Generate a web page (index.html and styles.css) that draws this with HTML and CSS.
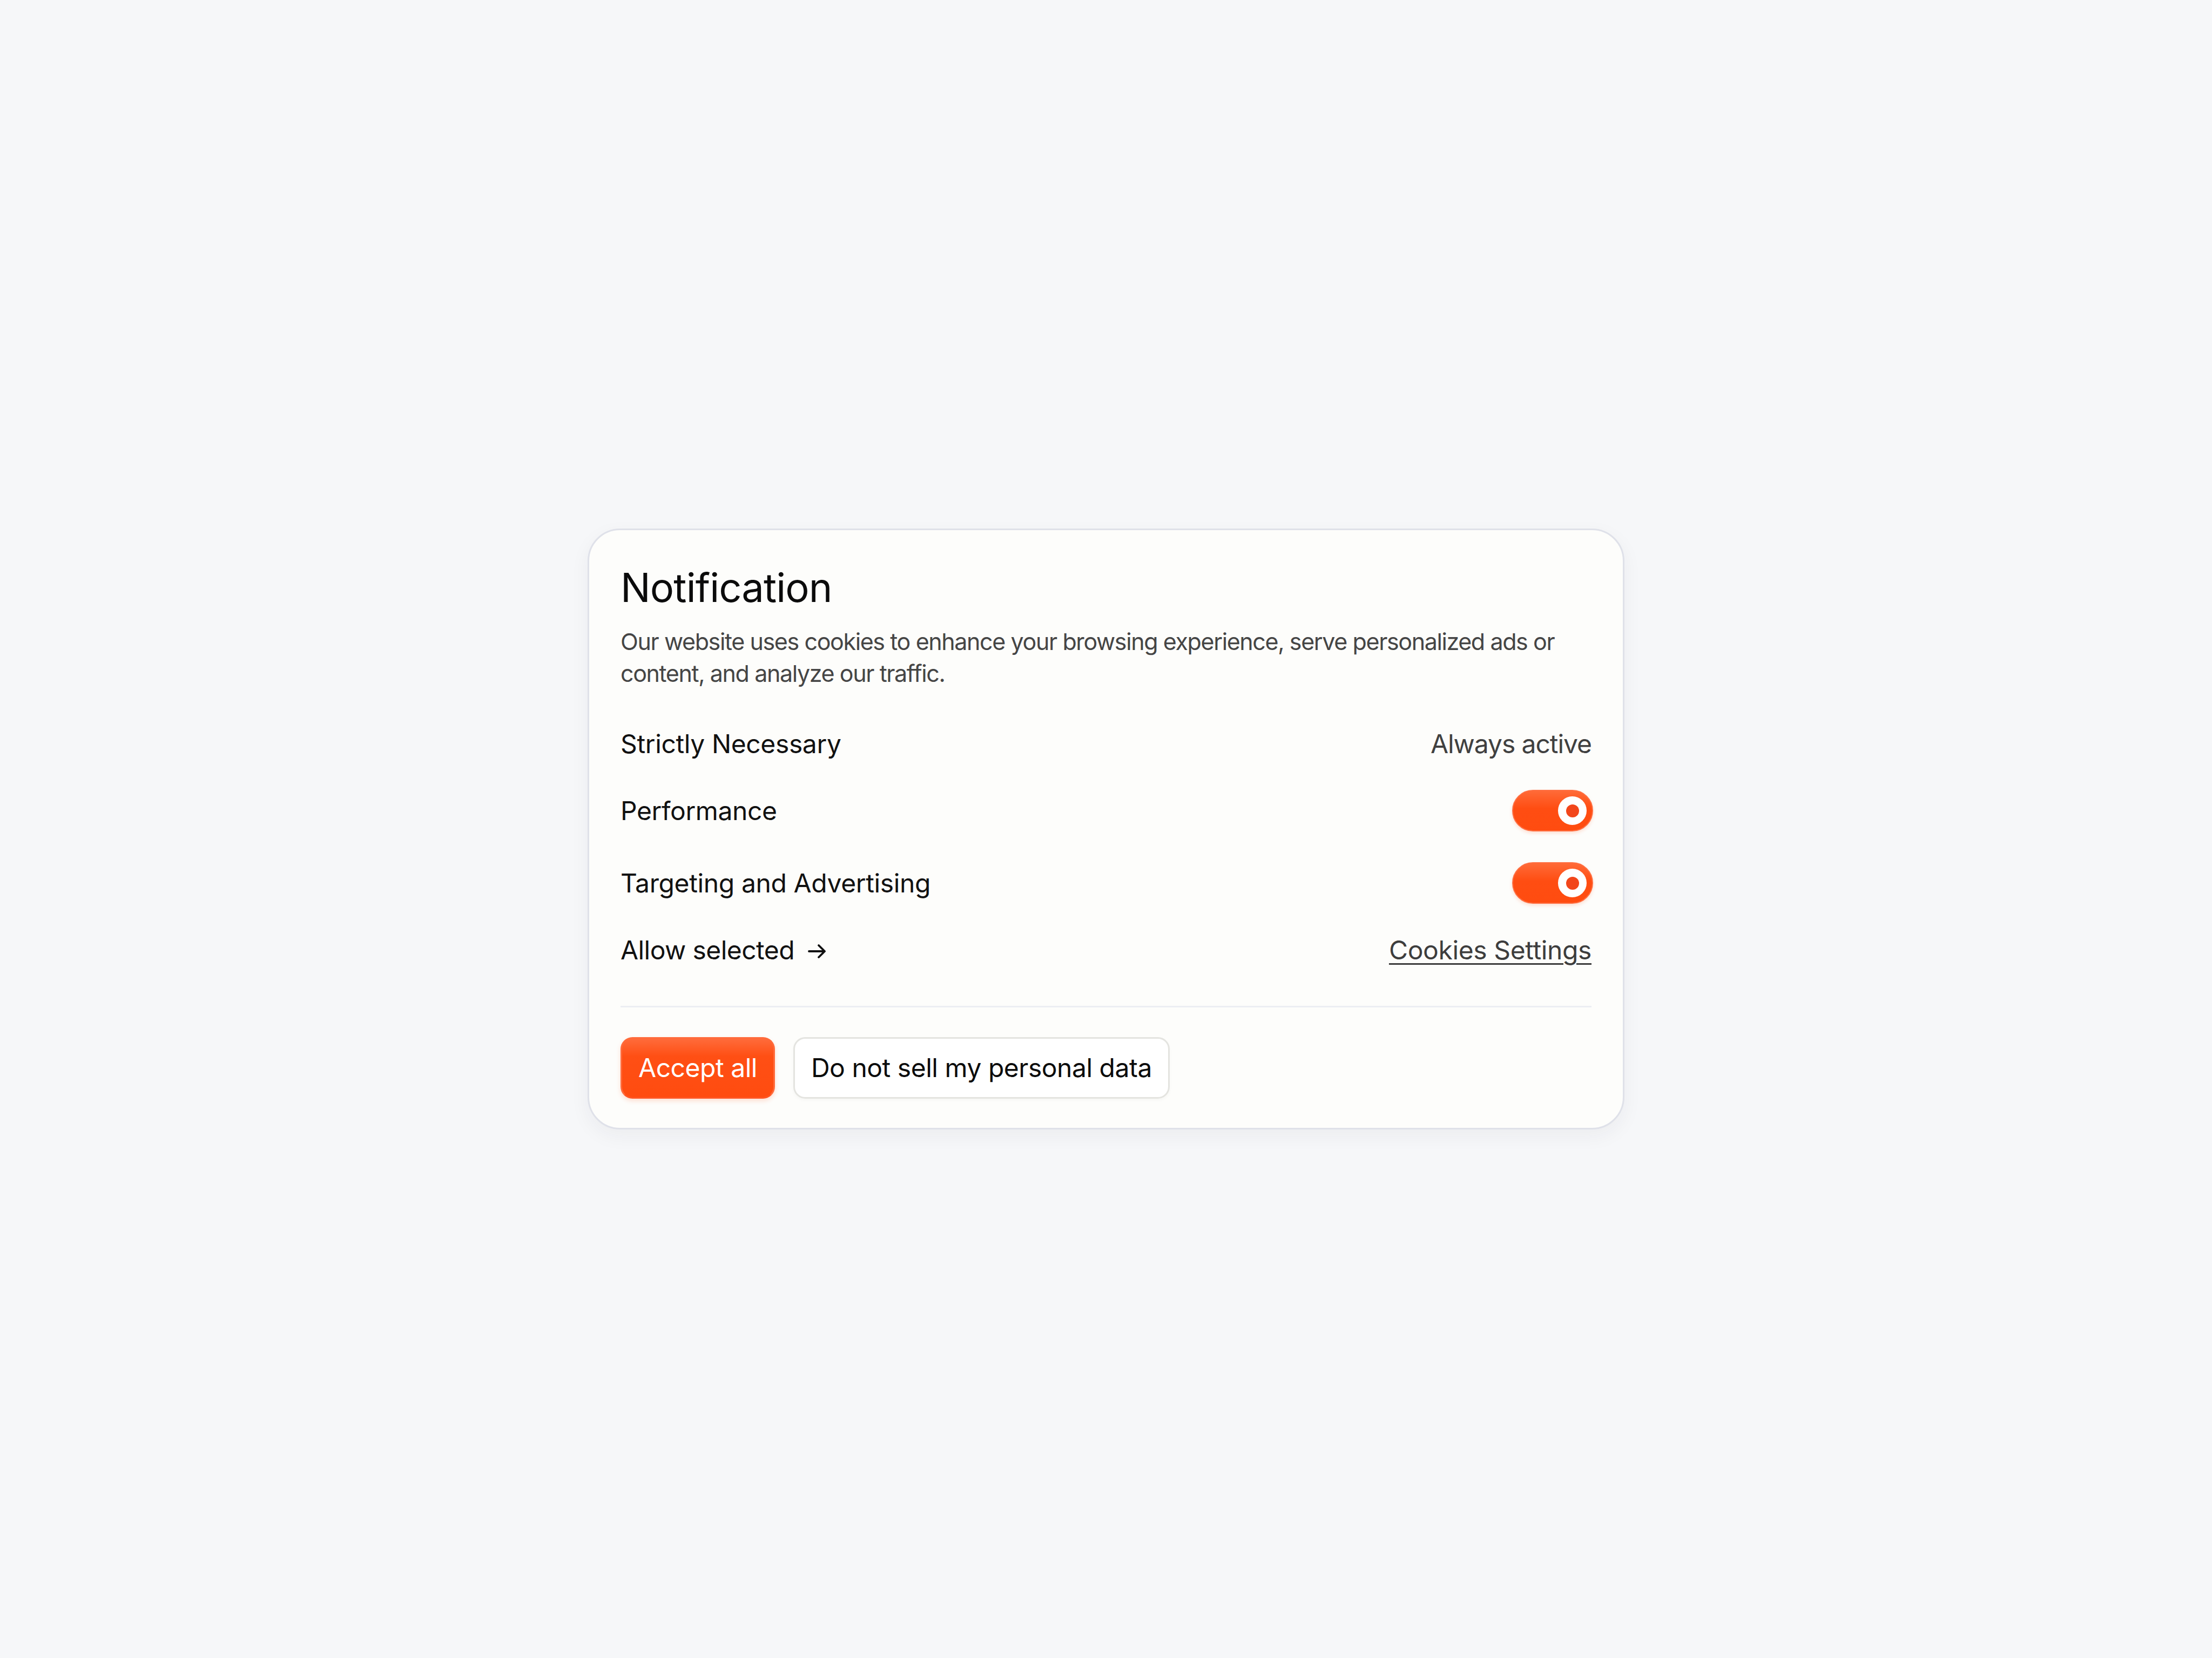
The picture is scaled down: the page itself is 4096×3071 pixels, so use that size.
FILE: index.html
```html
<!DOCTYPE html>
<html lang="en">

<head>
    <meta charset="UTF-8">
    <meta name="viewport" content="width=device-width, initial-scale=1.0">
    <title>Cookie Notification</title>
    <link rel="stylesheet" href="styles.css">
</head>

<body>
    <div class="cookie-card">
        <h1 class="cookie-title">Notification</h1>
        <p class="cookie-text">Our website uses cookies to enhance your browsing experience, serve personalized ads or
            content, and analyze our traffic.</p>

        <div class="cookie-options">
            <div class="option-row">
                <span class="option-label">Strictly Necessary</span>
                <span class="option-status">Always active</span>
            </div>
            <div class="option-row">
                <span class="option-label">Performance</span>
                <button class="toggle is-on" aria-label="Performance"><span class="knob"></span></button>
            </div>
            <div class="option-row">
                <span class="option-label">Targeting and Advertising</span>
                <button class="toggle is-on" aria-label="Targeting and Advertising"><span class="knob"></span></button>
            </div>
            <div class="option-row">
                <a class="allow-link" href="#">
                    Allow selected
                    <svg class="arrow" width="36" height="28" viewBox="0 0 36 28" fill="none">
                        <path d="M3 14H32M21 3L32 14L21 25" stroke="#111" stroke-width="3.8" stroke-linecap="round"
                            stroke-linejoin="round" />
                    </svg>
                </a>
                <a class="settings-link" href="#">Cookies Settings</a>
            </div>
        </div>

        <hr class="divider">

        <div class="actions">
            <button class="btn btn-primary">Accept all</button>
            <button class="btn btn-secondary">Do not sell my personal data</button>
        </div>
    </div>
</body>

</html>
```

FILE: styles.css
```css
html,
body {
    margin: 0;
    padding: 0;
}

body {
    min-height: 100vh;
    display: flex;
    align-items: center;
    justify-content: center;
    background-color: #f6f7f9;
    font-family: Inter, "Liberation Sans", sans-serif;
    color: #111;
}


.cookie-card {
    box-sizing: border-box;
    width: 1920px;
    padding: 62px 58px 54px;
    background-color: #fdfdfb;
    border: 3px solid #dfe1e9;
    border-radius: 60px;
    box-shadow: 0 12px 36px rgba(30, 35, 60, 0.05);
}


.cookie-title {
    margin: 0;
    font-size: 74px;
    font-weight: 400;
    line-height: 1.2;
    letter-spacing: -0.012em;
    color: #0b0b0b;
}

.cookie-text {
    margin: 26px 0 0;
    max-width: 1760px;
    font-size: 43px;
    line-height: 59px;
    letter-spacing: -1.4px;
    color: #454545;
}


.cookie-options {
    display: flex;
    flex-direction: column;
    gap: 57px;
    margin-top: 72px;
}

.option-row {
    display: flex;
    align-items: center;
    justify-content: space-between;
    font-size: 48px;
    line-height: 1.2;
}

.option-label {
    color: #111;
    letter-spacing: -0.008em;
}

.option-status {
    color: #404040;
    letter-spacing: -0.022em;
}


.toggle {
    position: relative;
    box-sizing: border-box;
    width: 150px;
    height: 77px;
    margin-right: -3px;
    padding: 0;
    border: 2px solid #ff6d3f;
    border-radius: 40px;
    background: linear-gradient(180deg, #ff6a37 0%, #ff4d12 45%, #ff4c10 100%);
    box-shadow: 0 3px 6px rgba(255, 76, 16, 0.18);
    cursor: pointer;
}

.toggle .knob {
    position: absolute;
    top: 10px;
    right: 10px;
    width: 53px;
    height: 53px;
    border-radius: 50%;
    background-color: #fff;
}

.toggle .knob::after {
    content: "";
    position: absolute;
    top: 14.5px;
    left: 14.5px;
    width: 24px;
    height: 24px;
    border-radius: 50%;
    background-color: #f2461b;
}


.allow-link {
    display: flex;
    align-items: center;
    gap: 24px;
    color: #111;
    text-decoration: none;
    letter-spacing: -0.012em;
}

.arrow {
    display: block;
    margin-top: 4px;
}

.settings-link {
    color: #3d3d3d;
    text-decoration: underline;
    text-decoration-thickness: 3px;
    text-underline-offset: 7px;
    letter-spacing: -0.008em;
}


.divider {
    height: 3px;
    margin: 74px 0 55px;
    border: 0;
    background-color: #eceef3;
}


.actions {
    display: flex;
    gap: 34px;
}

.btn {
    box-sizing: border-box;
    height: 114px;
    padding: 0 30px;
    border-radius: 22px;
    font-family: inherit;
    font-size: 48px;
    letter-spacing: -0.01em;
    cursor: pointer;
}

.btn-primary {
    color: #fff;
    border: 3px solid #ff6a3a;
    border-bottom-color: #ff5522;
    background: linear-gradient(180deg, #ff6b3a 0%, #ff4f14 30%, #ff4c10 100%);
    box-shadow: 0 4px 8px rgba(255, 76, 16, 0.18);
}

.btn-secondary {
    color: #0b0b0b;
    border: 3px solid #e4e4e0;
    background-color: #fff;
    box-shadow: 0 3px 6px rgba(0, 0, 0, 0.03);
}
```
